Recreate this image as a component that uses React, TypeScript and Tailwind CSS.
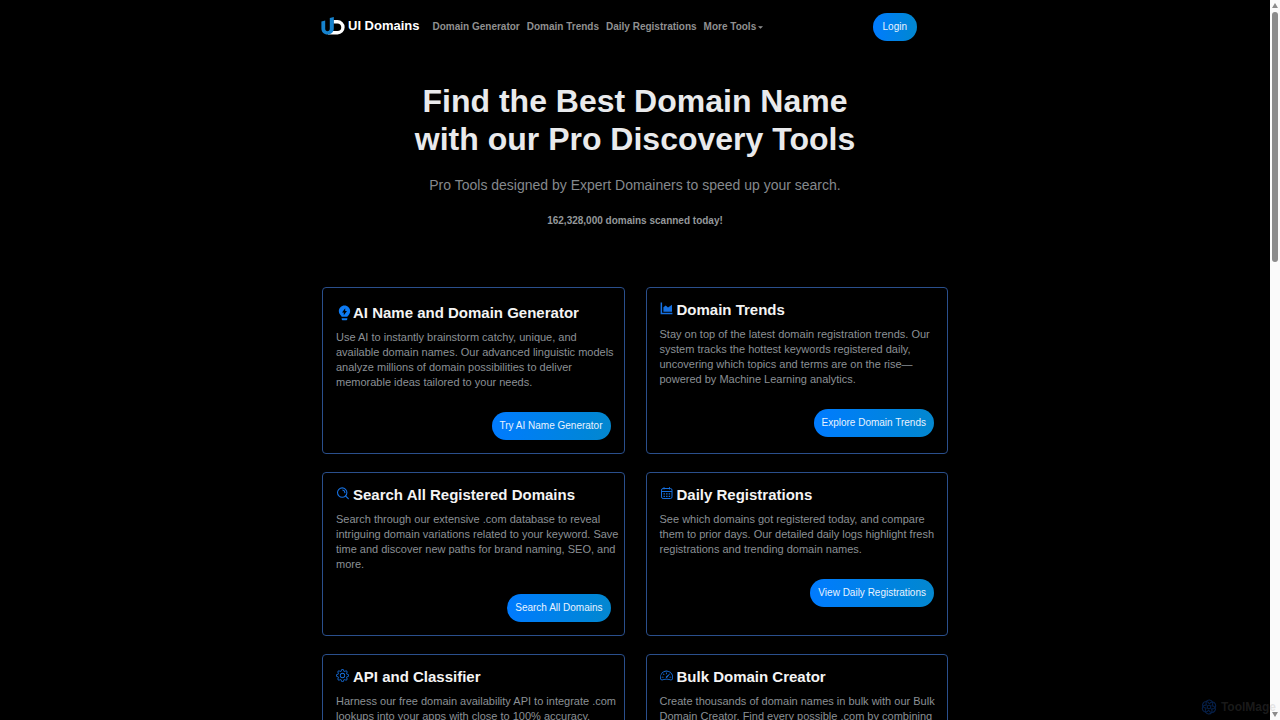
import { Fragment, type ComponentType, type SVGProps } from "react";
import { BsGear, BsSpeedometer2 } from "react-icons/bs";
import { RiLightbulbFlashFill } from "react-icons/ri";

type Tool = {
  title: string;
  lines: string[];
  action: string;
  Icon: ComponentType<SVGProps<SVGSVGElement>>;
  large?: boolean;
};

function AreaChartIcon(props: SVGProps<SVGSVGElement>) {
  return (
    <svg viewBox="0 0 13 13" fill="currentColor" {...props}>
      <path d="M.6.5h1.500v10.300h10.300v1.500H.6z" />
      <path d="M3.400 9.800V5.200L5.700 3.400l2.300 2.200L12 2.800v7z" />
    </svg>
  );
}

function SearchIcon(props: SVGProps<SVGSVGElement>) {
  return (
    <svg viewBox="0 0 13 13" fill="none" stroke="currentColor" strokeWidth="1.1" strokeLinecap="round" {...props}>
      <circle cx="6.2" cy="5.6" r="4.7" />
      <path d="M9.600 9l2.700 2.700M6.700 3a2.800 2.800 0 0 1 2.200 2.600" />
    </svg>
  );
}

function CalendarIcon(props: SVGProps<SVGSVGElement>) {
  return (
    <svg viewBox="0 0 13 13" fill="none" stroke="currentColor" {...props}>
      <rect x="1.5" y="1.500" width="10.500" height="10" rx="1.600" />
      <path d="M1.500 4.500h10.500M4 .2v2.200M9.500.2v2.200" />
      <path d="M3.500 6.900h1.400M6.100 6.900h1.400M8.700 6.900h1.400M3.500 9.300h1.400M6.100 9.300h1.400M8.700 9.300h1.400" strokeWidth="1.300" />
    </svg>
  );
}

const tools: Tool[] = [
  {
    title: "AI Name and Domain Generator",
    lines: [
      "Use AI to instantly brainstorm catchy, unique, and",
      "available domain names. Our advanced linguistic models",
      "analyze millions of domain possibilities to deliver",
      "memorable ideas tailored to your needs.",
    ],
    action: "Try AI Name Generator",
    Icon: RiLightbulbFlashFill,
    large: true,
  },
  {
    title: "Domain Trends",
    lines: [
      "Stay on top of the latest domain registration trends. Our",
      "system tracks the hottest keywords registered daily,",
      "uncovering which topics and terms are on the rise—",
      "powered by Machine Learning analytics.",
    ],
    action: "Explore Domain Trends",
    Icon: AreaChartIcon,
  },
  {
    title: "Search All Registered Domains",
    lines: [
      "Search through our extensive .com database to reveal",
      "intriguing domain variations related to your keyword. Save",
      "time and discover new paths for brand naming, SEO, and",
      "more.",
    ],
    action: "Search All Domains",
    Icon: SearchIcon,
  },
  {
    title: "Daily Registrations",
    lines: [
      "See which domains got registered today, and compare",
      "them to prior days. Our detailed daily logs highlight fresh",
      "registrations and trending domain names.",
    ],
    action: "View Daily Registrations",
    Icon: CalendarIcon,
  },
  {
    title: "API and Classifier",
    lines: [
      "Harness our free domain availability API to integrate .com",
      "lookups into your apps with close to 100% accuracy.",
    ],
    action: "Explore the API",
    Icon: BsGear,
  },
  {
    title: "Bulk Domain Creator",
    lines: [
      "Create thousands of domain names in bulk with our Bulk",
      "Domain Creator. Find every possible .com by combining",
    ],
    action: "Create Domains",
    Icon: BsSpeedometer2,
  },
];

const links = ["Domain Generator", "Domain Trends", "Daily Registrations"];

function Logo() {
  return (
    <svg viewBox="0 0 24 18" className="h-[18px] w-6 shrink-0" aria-hidden="true">
      <path d="M12.500 4.800h4a5.400 5.400 0 0 1 0 10.900H7" fill="none" stroke="#fff" strokeWidth="3.400" />
      <path d="M12.800 0v11.600c0 3.400-2.400 6-6.200 6S.4 15 .4 11.600V4.500l3.800-1v8.300c0 1.600.9 2.500 2.300 2.500s2.300-.9 2.300-2.500V1z" fill="#1683cf" />
    </svg>
  );
}

function ToolCard({ title, lines, action, Icon, large }: Tool) {
  return (
    <article className="flex flex-col rounded-[4px] border border-[#2a4f8c] p-[13px]">
      <h2 className={`flex items-end text-[15px] leading-[17px] font-bold text-[#f4f4f4] ${large ? "h-5" : "h-[17px] gap-1"}`}>
        <Icon className={large ? "size-[17px] text-[#0d7bf5]" : "mb-[3px] size-[13px] text-[#1670e0]"} aria-hidden="true" />
        {title}
      </h2>
      <p className="mt-[9px] text-[11px] leading-[15px] whitespace-nowrap text-[#8b9095]">
        {lines.map((line, index) => (
          <Fragment key={line}>
            {index > 0 && <br />}
            {line}
          </Fragment>
        ))}
      </p>
      <a
        href="#"
        className="mt-[22px] self-end rounded-full bg-linear-to-r from-[#007bff] to-[#0487cf] px-2 py-[7px] text-[10px] leading-[14px] text-[#e8f3ff]"
      >
        {action}
      </a>
    </article>
  );
}

export default function App() {
  return (
    <div className="relative flex h-screen overflow-hidden bg-black font-['Liberation_Sans',Arial,sans-serif]">
      <div className="min-w-0 flex-1 overflow-hidden">
        <header className="mx-auto flex h-[54px] max-w-[628px] items-center">
          <a href="#" className="flex items-center gap-[3px] pb-0.5 text-[13px] leading-5 font-bold text-white">
            <Logo />
            UI Domains
          </a>
          <nav className="ml-[13px] flex flex-1 items-center gap-[7px] text-[10px] leading-[14px] font-bold text-[#909090]">
            {links.map((link) => (
              <a key={link} href="#">
                {link}
              </a>
            ))}
            <button type="button" className="flex items-center gap-[2px] font-bold">
              More Tools
              <svg viewBox="0 0 6 3" className="h-[3px] w-[5px] fill-current" aria-hidden="true">
                <path d="M0 0h6L3 3z" />
              </svg>
            </button>
          </nav>
          <button
            type="button"
            className="mr-8 rounded-full bg-linear-to-r from-[#007bff] to-[#0487cf] px-[10px] py-[7px] text-[10px] leading-[14px] text-[#e8f3ff]"
          >
            Login
          </button>
        </header>
        <main className="mx-auto max-w-[626px]">
          <section className="pt-7 text-center">
            <h1 className="text-[32px] leading-[38px] font-bold text-[#e9eaec]">
              Find the Best Domain Name
              <br />
              with our Pro Discovery Tools
            </h1>
            <p className="mt-[17px] text-[14px] leading-5 text-[#85898d]">
              Pro Tools designed by Expert Domainers to speed up your search.
            </p>
            <p className="mt-[18px] text-[10px] leading-[15px] font-bold text-[#94989b]">
              162,328,000 domains scanned today!
            </p>
          </section>
          <section className="mt-[59px] grid grid-cols-2 gap-x-[21px] gap-y-[18px]">
            {tools.map((tool) => (
              <ToolCard key={tool.title} {...tool} />
            ))}
          </section>
        </main>
      </div>
      <div className="flex w-[10px] flex-col items-center bg-[#fafafa] py-[3px]" aria-hidden="true">
        <svg viewBox="0 0 6 5" className="h-[5px] w-[6px] fill-[#8b8b8b]">
          <path d="M3 0l3 5H0z" />
        </svg>
        <div className="mt-1 h-[35%] w-[6px] rounded-full bg-[#8b8b8b]" />
        <svg viewBox="0 0 6 5" className="mt-auto h-[5px] w-[6px] fill-[#8b8b8b]">
          <path d="M3 5l3-5H0z" />
        </svg>
      </div>
      <div className="absolute right-1 bottom-[5px] flex items-center gap-1 text-[12px] leading-4 font-bold text-[#888888]/20">
        <svg viewBox="0 0 16 16" className="size-4" fill="none" stroke="#06204a" strokeWidth="1.1" aria-hidden="true">
          <circle cx="8" cy="8" r="1.8" />
          {[0, 60, 120, 180, 240, 300].map((angle) => (
            <path key={angle} d="M5.500 6.500C4 3 6 .8 8.500 1s4.500 3 2.500 5.500" transform={`rotate(${angle} 8 8)`} />
          ))}
        </svg>
        <span>ToolMage</span>
      </div>
    </div>
  );
}
